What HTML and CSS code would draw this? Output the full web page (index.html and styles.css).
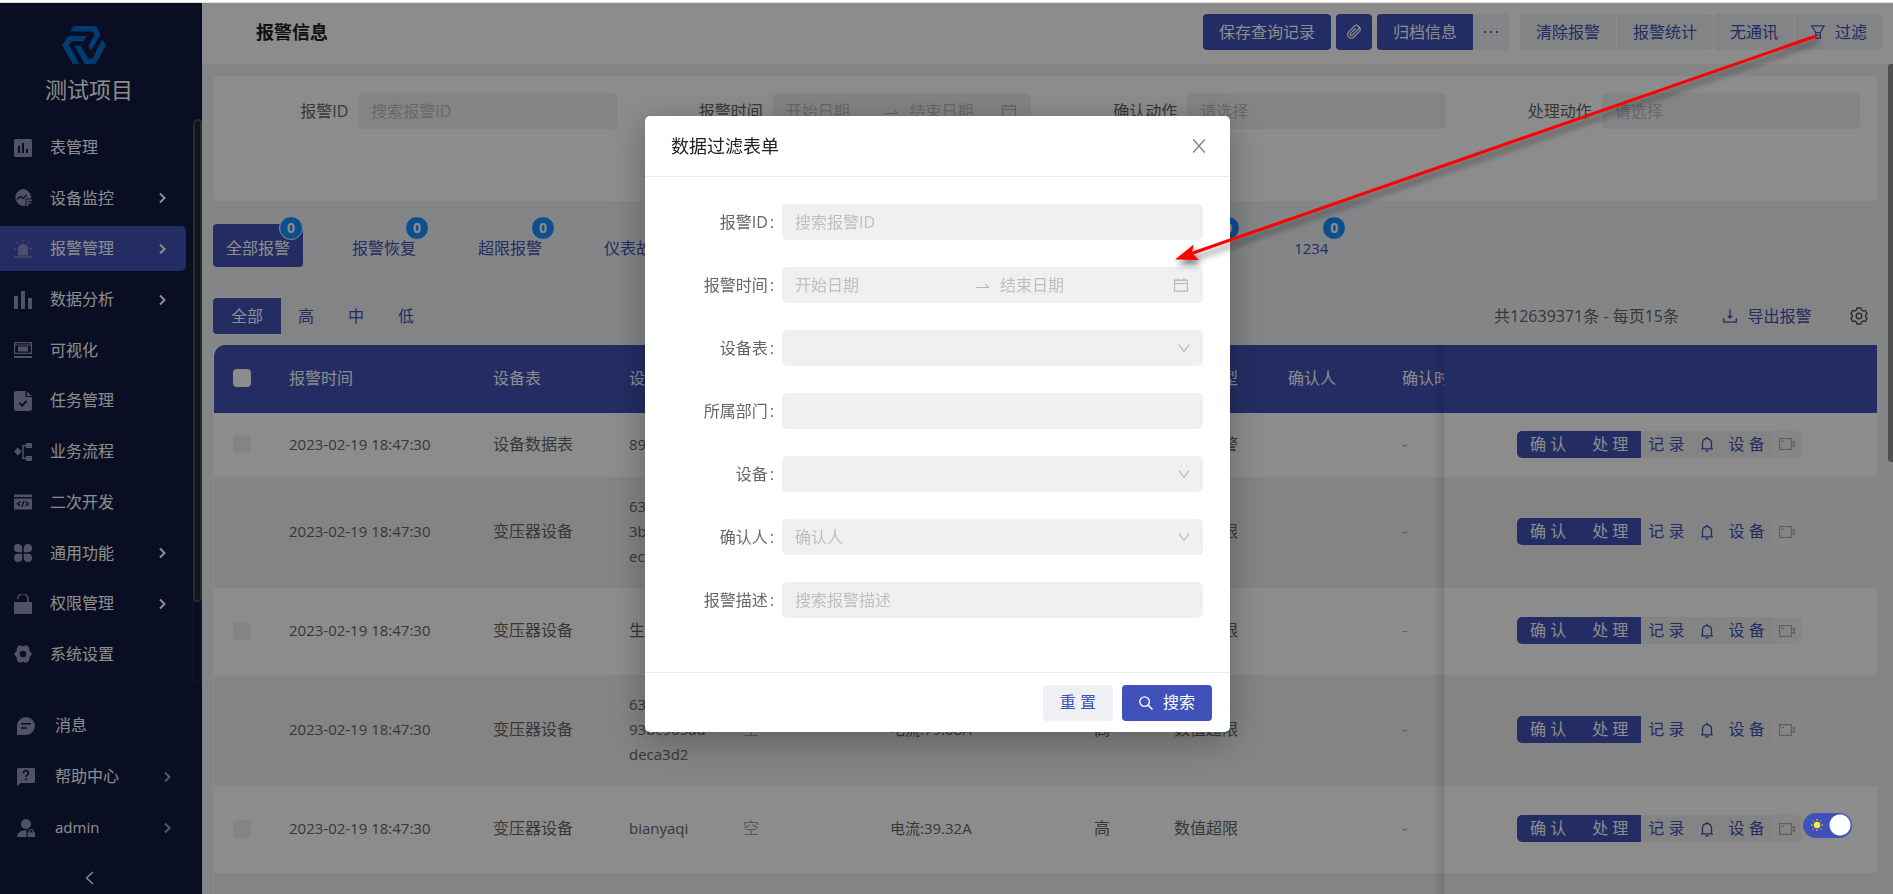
FILE: index.html
```html
<!DOCTYPE html>
<html lang="zh-CN">
<head>
<meta charset="utf-8">
<title>报警信息</title>
<link rel="stylesheet" href="styles.css">
</head>
<body>
<svg class="sprite" aria-hidden="true">
  <symbol id="i-right" viewBox="0 0 12 12"><path d="M4 1.5 8.5 6 4 10.5" fill="none" stroke="currentColor" stroke-width="2"/></symbol>
  <symbol id="i-down" viewBox="0 0 12 12"><path d="M1 2.5 6 9.5 11 2.5" fill="none" stroke="currentColor" stroke-width="1.2"/></symbol>
  <symbol id="i-cal" viewBox="0 0 14 14"><path d="M.6 2.1h12.800v11H.6zM.6 5.500h12.800M4 .3v3M10 .3v3" fill="none" stroke="currentColor" stroke-width="1.100"/></symbol>
  <symbol id="i-swap" viewBox="0 0 14 14"><path d="M.5 9.500h12.500L10 6" fill="none" stroke="currentColor" stroke-width="1.100"/></symbol>
  <symbol id="i-bell" viewBox="0 0 16 16"><path d="M3.500 12.600V7a4.500 4.500 0 0 1 9 0v5.600M2 12.900h12M8 2.500V.8M6.600 14.200a1.500 1.500 0 0 0 2.800 0" fill="none" stroke="currentColor" stroke-width="1.300"/></symbol>
  <symbol id="i-cam" viewBox="0 0 16 14"><path d="M.6 1.600h11.800v10.800H.6zM12.400 6l3-1.600v5.200l-3-1.600M2.600 4.300h2.400" fill="none" stroke="currentColor" stroke-width="1.200"/></symbol>
</svg>

<div class="app">
  <aside class="sidebar">
    <div class="brand">
      <svg class="logo" viewBox="0 0 44 38"><g fill="#006dcf"><path d="M11.500 0H34l4.500 8.500L29 25l-2.700-5.200L32.500 8.800 31 5.500H8.300z"/><path d="M6.500 10h18.200l-3.200 5.300H9.700L7 19l10.300 19h-6.500L0 19.200z"/><path d="M40.300 13.500 44 19.200 33.500 38H22.800L12.200 19.500h6.400l7.500 13h4.400L37 19.500z"/></g></svg>
      <span class="brand-name">测试项目</span>
    </div>
    <div class="menu-wrap">
      <nav class="menu">
        <a class="item" href="#"><svg class="ico" viewBox="0 0 18 18"><path fill-rule="evenodd" fill="currentColor" d="M1.500 0h15A1.500 1.500 0 0 1 18 1.500v15a1.500 1.500 0 0 1-1.500 1.500h-15A1.500 1.500 0 0 1 0 16.500v-15A1.500 1.500 0 0 1 1.500 0zM4 7v7h2V7zm4-3v10h2V4zm4 6v4h2v-4z"/></svg><span>表管理</span></a>
        <a class="item" href="#"><svg class="ico" viewBox="0 0 18 18"><path fill="currentColor" d="M8.500 0a8.500 8.500 0 0 1 8.500 9.500h-5.500v7.300A8.500 8.500 0 1 1 8.500 0z"/><path d="m3 10.500 3.500-3.200 2.500 2L13 6" fill="none" stroke="#121a3e" stroke-width="1.300"/><path fill="currentColor" d="M12.500 10.500h5.500V12h-3.800v1h3v1.400h-3v3h-1.700z"/></svg><span>设备监控</span><svg class="chev"><use href="#i-right"/></svg></a>
        <a class="item active" href="#"><svg class="ico" viewBox="0 0 18 18"><path fill="currentColor" d="M4 15.500V9a5 5 0 0 1 10 0v6.500zM0 16.300h18v1.200H0zM8.500 0h1v2.500h-1zM2.600 2.200l.8-.7 1.600 1.900-.7.600zM14.600 1.500l.8.700L13.700 4l-.7-.6zM0 8.300h2.300v1H0zM15.700 8.300H18v1h-2.300z"/></svg><span>报警管理</span><svg class="chev"><use href="#i-right"/></svg></a>
        <a class="item" href="#"><svg class="ico" viewBox="0 0 18 18"><path fill="currentColor" d="M0 5h4v13H0zM7 0h4v18H7zM14 7h4v11h-4z"/></svg><span>数据分析</span><svg class="chev"><use href="#i-right"/></svg></a>
        <a class="item" href="#"><svg class="ico" viewBox="0 0 18 18"><path d="M.6 1.600h16.800v10.800H.6z" fill="none" stroke="currentColor" stroke-width="1.200"/><path d="M0 4h18" stroke="currentColor" stroke-width="1"/><path fill="currentColor" d="M4 5.500h10v5H4zM0 15h18v2H0z"/></svg><span>可视化</span></a>
        <a class="item" href="#"><svg class="ico" viewBox="0 0 18 20"><path fill="currentColor" d="M2.500 0H11.500v6H18v11.500a2.500 2.500 0 0 1-2.500 2.500h-13A2.500 2.500 0 0 1 0 17.500v-15A2.500 2.500 0 0 1 2.500 0zM13 .5 17.600 5H13z"/><path d="m5.500 12 2.700 2.600L12.500 10" fill="none" stroke="#121a3e" stroke-width="1.900"/></svg><span>任务管理</span></a>
        <a class="item" href="#"><svg class="ico" viewBox="0 0 18 18"><path fill="currentColor" d="m0 8.500 3.800-4 3.800 4-3.800 4zM12 0h6v5h-6zM12 13h6v5h-6z"/><path d="M12 2.500H9v13h3" fill="none" stroke="currentColor" stroke-width="1.500"/></svg><span>业务流程</span></a>
        <a class="item" href="#"><svg class="ico" viewBox="0 0 18 18"><path fill="currentColor" d="M0 1.500h18V4H0zM0 5.500h18v11H0z"/><path d="M6.500 8.500 3.500 10.800l3 2.200M11.500 8.500l3 2.300-3 2.200M10 8l-2 5.500" fill="none" stroke="#121a3e" stroke-width="1.300"/></svg><span>二次开发</span></a>
        <a class="item" href="#"><svg class="ico" viewBox="0 0 18 18"><path fill="currentColor" d="M4 0a4 4 0 0 1 4.200 4v4.200H4A4 4 0 1 1 4 0zM14 0a4 4 0 1 1 0 8.200H9.800V4A4 4 0 0 1 14 0zM4 9.800h4.200V14A4.100 4.100 0 1 1 4 9.800zM9.800 9.800H14A4.100 4.100 0 1 1 9.800 14z"/></svg><span>通用功能</span><svg class="chev"><use href="#i-right"/></svg></a>
        <a class="item" href="#"><svg class="ico" viewBox="0 0 18 20"><rect y="8" width="18" height="12" rx="1" fill="currentColor"/><path d="M3.500 5a5.200 5.200 0 0 1 10.400 0v3" fill="none" stroke="currentColor" stroke-width="1.500"/></svg><span>权限管理</span><svg class="chev"><use href="#i-right"/></svg></a>
        <a class="item" href="#"><svg class="ico" viewBox="0 0 18 18"><path fill="currentColor" fill-rule="evenodd" d="M4.500.5h3L9 1.500l1.500-1h3L15.200 3v2.200L18 9l-2.800 3.800V15l-1.700 2.500h-3l-1.500-1-1.500 1h-3L2.800 15v-2.200L0 9l2.800-3.800V3zM9 5.800a3.200 3.200 0 1 0 0 6.400 3.200 3.200 0 0 0 0-6.400z"/></svg><span>系统设置</span></a>
      </nav>
      <div class="menu-track"><div class="menu-thumb"></div></div>
    </div>
    <nav class="menu-foot">
      <a class="item" href="#"><svg class="ico" viewBox="0 0 18 18"><path fill="currentColor" d="M9 0a9 9 0 1 1 0 18H0V9a9 9 0 0 1 9-9z"/><path d="M4 6.800h10M4 11h6" stroke="#121a3e" stroke-width="1.600"/></svg><span>消息</span></a>
      <a class="item" href="#"><svg class="ico" viewBox="0 0 18 18"><path fill="currentColor" d="M1.500 0h15A1.500 1.500 0 0 1 18 1.500v12a1.500 1.500 0 0 1-1.500 1.500H4l-4 3V1.500A1.500 1.500 0 0 1 1.500 0z"/><path d="M6.600 5.200A2.400 2.400 0 1 1 9.900 7.200Q9 7.600 9 9M9 10.400v1.800" fill="none" stroke="#121a3e" stroke-width="1.700"/></svg><span>帮助中心</span><svg class="chev"><use href="#i-right"/></svg></a>
      <a class="item" href="#"><svg class="ico" viewBox="0 0 18 18"><circle cx="9" cy="5" r="5" fill="currentColor"/><path fill="currentColor" d="M0 18c0-4 3.500-6.800 8.500-6.800h1V18zM10.700 13.500H18V18h-7.300z"/><path d="M12.300 14v-1.500a2 2 0 0 1 4 0V14" fill="none" stroke="currentColor" stroke-width="1.200"/></svg><span class="latin">admin</span><svg class="chev"><use href="#i-right"/></svg></a>
      <button class="collapse" aria-label="收起"><svg viewBox="0 0 10 14"><path d="M8 1 1.500 7 8 13" fill="none" stroke="currentColor" stroke-width="1.400"/></svg></button>
    </nav>
  </aside>

  <main class="main">
    <header class="topbar">
      <h1>报警信息</h1>
      <div class="actions">
        <button class="btn primary">保存查询记录</button>
        <button class="btn primary square" aria-label="附件"><svg class="i16" viewBox="0 0 16 16"><path d="M13.800 7.200 8 13a3.700 3.700 0 0 1-5.300-5.200L8.500 2a2.500 2.500 0 0 1 3.600 3.500l-5.600 5.700a1.300 1.300 0 0 1-1.900-1.800L9.800 4.300M13.800 7.200A3.700 3.700 0 0 0 12 2" fill="none" stroke="currentColor" stroke-width="1.200"/></svg></button>
        <div class="group"><button class="btn primary">归档信息</button><button class="btn square" aria-label="更多"><svg class="i16" viewBox="0 0 16 16"><path fill="currentColor" d="M1 7h2v2H1zM7 7h2v2H7zM13 7h2v2h-2z"/></svg></button></div>
        <div class="group links"><button class="btn">清除报警</button><button class="btn">报警统计</button><button class="btn">无通讯</button><button class="btn"><svg class="i14" viewBox="0 0 14 14"><path d="M.8.8h12.400L9.300 7.500H4.700zM4.700 7.500v5.700h4.600V7.500M4.700 10h4.600" fill="none" stroke="currentColor" stroke-width="1.200"/></svg>过滤</button></div>
      </div>
    </header>

    <div class="body">
      <div class="content">
        <section class="search">
          <div class="field"><label for="s-id">报警ID</label><div class="box"><input id="s-id" placeholder="搜索报警ID"></div></div>
          <div class="field"><label for="s-from">报警时间</label><div class="box"><input id="s-from" placeholder="开始日期"><svg class="swap"><use href="#i-swap"/></svg><input aria-label="结束日期" placeholder="结束日期"><svg class="i14"><use href="#i-cal"/></svg></div></div>
          <div class="field"><label for="s-ack">确认动作</label><div class="box"><select id="s-ack"><option>请选择</option></select></div></div>
          <div class="field"><label for="s-act">处理动作</label><div class="box"><select id="s-act"><option>请选择</option></select></div></div>
        </section>

        <div class="tabs">
          <button class="tab on">全部报警<i>0</i></button>
          <button class="tab">报警恢复<i>0</i></button>
          <button class="tab">超限报警<i>0</i></button>
          <button class="tab">仪表故障<i>0</i></button>
          <button class="tab">通讯故障<i>0</i></button>
          <button class="tab">待确认<i>0</i></button>
          <button class="tab">未处理<i>0</i></button>
          <button class="tab">已处理<i>0</i></button>
          <button class="tab">其他2<i>0</i></button>
          <button class="tab short">1234<i>0</i></button>
        </div>

        <div class="toolbar">
          <div class="group"><button class="btn primary all">全部</button><button class="btn">高</button><button class="btn">中</button><button class="btn">低</button></div>
          <span class="total">共12639371条 - 每页15条</span>
          <button class="btn export"><svg class="i14" viewBox="0 0 14 14"><path d="M.7 9v4.200h12.600V9M7 .5v8.500M4.800 6.800 7 9l2.200-2.200" fill="none" stroke="currentColor" stroke-width="1.300"/></svg>导出报警</button>
          <button class="gear" aria-label="设置"><svg viewBox="0 0 18 18"><path d="M7 1h4l.6 2.200 1.400.8 2.200-.6 1.900 3.400L15.600 8.300v1.400l1.500 1.500-1.900 3.400-2.200-.6-1.400.8L11 17H7l-.6-2.200L5 14l-2.200.6-1.900-3.400 1.500-1.500V8.300L.9 6.800l1.900-3.400L5 4l1.400-.8z" fill="none" stroke="currentColor" stroke-width="1.400" stroke-linejoin="round"/><circle cx="9" cy="9" r="2.800" fill="none" stroke="currentColor" stroke-width="1.400"/></svg></button>
        </div>

        <div class="table-wrap">
          <table>
            <colgroup><col class="c-check"><col class="c-wide"><col class="c-table"><col class="c-dev"><col class="c-dept"><col class="c-wide"><col class="c-level"><col class="c-dev"><col class="c-dev"><col class="c-wide"><col class="c-ops"></colgroup>
            <thead><tr><th><input type="checkbox" aria-label="全选"></th><th>报警时间</th><th>设备表</th><th>设备</th><th>所属部门</th><th>报警描述</th><th>级别</th><th>报警类型</th><th>确认人</th><th>确认时间</th><th class="fix"></th></tr></thead>
            <tbody>
              <tr><td><input type="checkbox" aria-label="选择"></td><td class="latin">2023-02-19 18:47:30</td><td>设备数据表</td><td class="latin">89</td><td class="dim"></td><td></td><td></td><td>仪表报警</td><td></td><td class="dim">-</td><td class="fix"><div class="ops"><button class="op p">确 认</button><button class="op p">处 理</button><button class="op">记 录</button><button class="op" aria-label="通知"><svg class="i16"><use href="#i-bell"/></svg></button><button class="op">设 备</button><button class="op cam" aria-label="视频"><svg class="i16"><use href="#i-cam"/></svg></button></div></td></tr>
              <tr><td><input type="checkbox" aria-label="选择"></td><td class="latin">2023-02-19 18:47:30</td><td>变压器设备</td><td class="latin">63<br>3b<br>ec</td><td class="dim"></td><td></td><td></td><td>数值超限</td><td></td><td class="dim">-</td><td class="fix"><div class="ops"><button class="op p">确 认</button><button class="op p">处 理</button><button class="op">记 录</button><button class="op" aria-label="通知"><svg class="i16"><use href="#i-bell"/></svg></button><button class="op">设 备</button><button class="op cam" aria-label="视频"><svg class="i16"><use href="#i-cam"/></svg></button></div></td></tr>
              <tr class="mid"><td><input type="checkbox" aria-label="选择"></td><td class="latin">2023-02-19 18:47:30</td><td>变压器设备</td><td>生</td><td class="dim"></td><td></td><td></td><td>数值超限</td><td></td><td class="dim">-</td><td class="fix"><div class="ops"><button class="op p">确 认</button><button class="op p">处 理</button><button class="op">记 录</button><button class="op" aria-label="通知"><svg class="i16"><use href="#i-bell"/></svg></button><button class="op">设 备</button><button class="op cam" aria-label="视频"><svg class="i16"><use href="#i-cam"/></svg></button></div></td></tr>
              <tr><td><input type="checkbox" aria-label="选择"></td><td class="latin">2023-02-19 18:47:30</td><td>变压器设备</td><td class="latin">63<br>93bc965ad<br>deca3d2</td><td class="dim">空</td><td class="latin">电流:79.08A</td><td>高</td><td>数值超限</td><td></td><td class="dim">-</td><td class="fix"><div class="ops"><button class="op p">确 认</button><button class="op p">处 理</button><button class="op">记 录</button><button class="op" aria-label="通知"><svg class="i16"><use href="#i-bell"/></svg></button><button class="op">设 备</button><button class="op cam" aria-label="视频"><svg class="i16"><use href="#i-cam"/></svg></button></div></td></tr>
              <tr class="mid"><td><input type="checkbox" aria-label="选择"></td><td class="latin">2023-02-19 18:47:30</td><td>变压器设备</td><td class="latin">bianyaqi</td><td class="dim">空</td><td class="latin">电流:39.32A</td><td>高</td><td>数值超限</td><td></td><td class="dim">-</td><td class="fix"><div class="ops"><button class="op p">确 认</button><button class="op p">处 理</button><button class="op">记 录</button><button class="op" aria-label="通知"><svg class="i16"><use href="#i-bell"/></svg></button><button class="op">设 备</button><button class="op cam" aria-label="视频"><svg class="i16"><use href="#i-cam"/></svg></button></div></td></tr>
              <tr class="mid"><td></td><td></td><td></td><td></td><td></td><td></td><td></td><td></td><td></td><td></td><td class="fix"></td></tr>
            </tbody>
          </table>
        </div>
      </div>
      <div class="page-track"><div class="page-thumb"></div></div>
    </div>
  </main>
</div>

<div class="mask">
  <form class="modal" role="dialog" aria-labelledby="dlg-title">
    <div class="modal-head"><h2 id="dlg-title">数据过滤表单</h2><button type="button" class="close" aria-label="关闭"><svg viewBox="0 0 14 14"><path d="M1.200.5 12.800 13.500M12.800.5 1.200 13.500" stroke="currentColor" stroke-width="1.300"/></svg></button></div>
    <div class="modal-body">
      <div class="row"><label for="f-id">报警ID<b>:</b></label><div class="box"><input id="f-id" placeholder="搜索报警ID"></div></div>
      <div class="row"><label for="f-from">报警时间<b>:</b></label><div class="box"><input id="f-from" placeholder="开始日期"><svg class="swap"><use href="#i-swap"/></svg><input aria-label="结束日期" placeholder="结束日期"><svg class="i14"><use href="#i-cal"/></svg></div></div>
      <div class="row"><label for="f-table">设备表<b>:</b></label><div class="box"><select id="f-table"><option></option></select><svg class="i12"><use href="#i-down"/></svg></div></div>
      <div class="row"><label for="f-dept">所属部门<b>:</b></label><div class="box"><input id="f-dept"></div></div>
      <div class="row"><label for="f-dev">设备<b>:</b></label><div class="box"><select id="f-dev"><option></option></select><svg class="i12"><use href="#i-down"/></svg></div></div>
      <div class="row"><label for="f-user">确认人<b>:</b></label><div class="box"><select id="f-user"><option>确认人</option></select><svg class="i12"><use href="#i-down"/></svg></div></div>
      <div class="row"><label for="f-desc">报警描述<b>:</b></label><div class="box"><input id="f-desc" placeholder="搜索报警描述"></div></div>
    </div>
    <div class="modal-foot">
      <button type="reset" class="btn">重 置</button>
      <button type="button" class="btn primary"><svg class="i14" viewBox="0 0 14 14"><circle cx="5.600" cy="5.600" r="4.800" fill="none" stroke="currentColor" stroke-width="1.300"/><path d="m9 9 4.500 4.500" stroke="currentColor" stroke-width="1.500"/></svg>搜索</button>
    </div>
  </form>
</div>

<label class="theme"><input type="checkbox" role="switch" aria-label="主题" checked><svg viewBox="0 0 12 12"><circle cx="6" cy="6" r="3.200" fill="#ffee2e"/><path d="M6 0v1.500M6 10.500V12M0 6h1.500M10.500 6H12M1.500 1.500l1 1M9.500 9.500l1 1M1.500 10.500l1-1M9.500 2.500l1-1" stroke="#ffee2e" stroke-width="1"/></svg></label>

<svg class="arrow" viewBox="0 0 660 250" aria-hidden="true"><path d="M20 224 646 6" stroke="#f00" stroke-width="3"/><path d="M5 229.500 23.700 214.500 22 223 29 230z" fill="#f00"/></svg>
</body>
</html>
```
FILE: styles.css
```css
* { box-sizing: border-box; }
body {
  margin: 0;
  height: 100vh;
  overflow: hidden;
  padding-top: 3px;
  background: linear-gradient(#fff 2px, #dcdcdc 2px, #dcdcdc 3px, #fff 3px);
  font: 16px/25px "Open Sans", "Noto Sans CJK SC", sans-serif;
  color: #666;
}
button, input, select { font: inherit; color: inherit; margin: 0; border: 0; padding: 0; background: none; }
a { color: inherit; text-decoration: none; }
h1, h2 { margin: 0; }
svg { display: block; flex: none; }
.sprite { position: absolute; width: 0; height: 0; }
.i12 { width: 12px; height: 12px; }
.i14 { width: 14px; height: 14px; }
.i16 { width: 16px; height: 16px; }
.latin { font-size: 15px; }

.app { display: flex; height: 100%; }

/* Sidebar */
.sidebar { width: 202px; flex: none; display: flex; flex-direction: column; background: #121a3e; color: #fff; }
.brand { height: 116px; padding: 23px 24px 0 0; display: flex; flex-direction: column; align-items: center; gap: 7px; }
.logo { width: 44px; height: 38px; margin-right: 10px; }
.brand-name { font-size: 22px; line-height: 36px; }
.menu-wrap { flex: 1; display: flex; min-height: 0; }
.menu { flex: 1; padding: 6px 7px 6px 0; display: flex; flex-direction: column; justify-content: space-between; }
.item { height: 45px; flex: none; padding: 0 18px 0 14px; display: flex; align-items: center; border-radius: 0 5px 5px 0; }
.item.active { background: #4052b6; }
.item span { margin-left: 18px; flex: 1; }
.ico { width: 18px; height: 20px; color: #9397b4; }
.active .ico { color: #8b93c4; }
.chev { width: 12px; height: 14px; }
.menu-track { width: 9px; border: 1px solid #2c3156; border-radius: 5px; }
.menu-thumb { width: 9px; height: 86%; margin: -1px; border-radius: 5px; background: #24262f; border: 2px solid #494c57; }
.menu-foot { padding: 20px 14px 0 3px; display: flex; flex-direction: column; gap: 6px; }
.menu-foot .item { padding-right: 15px; }
.menu-foot .item span { margin-left: 20px; }
.menu-foot .chev { color: #9a9db0; }
.collapse { align-self: center; width: 30px; height: 38px; padding-top: 6px; margin-right: 12px; display: grid; place-items: center; color: #fff; }
.collapse svg { width: 10px; height: 14px; }

/* Top bar */
.main { flex: 1; min-width: 0; display: flex; flex-direction: column; background: #f0f2f5; }
.topbar { height: 61px; flex: none; padding: 0 10px 3px 54px; display: flex; align-items: center; justify-content: space-between; background: #fff; }
h1 { font-size: 18px; color: #222; }
.actions { display: flex; gap: 5px; }
.group { display: flex; }
.links { margin-left: 6px; gap: 1px; }
.btn { height: 36px; padding: 0 17px; display: flex; align-items: center; justify-content: center; gap: 10px; border-radius: 4px; background: #eff0f3; color: #4052b6; white-space: nowrap; }
.topbar .btn { padding: 0 16px; }
.btn.primary { background: #4052b9; color: #fff; }
.topbar .square { width: 36px; padding: 0; }
.group .btn.primary { border-radius: 4px 0 0 4px; }

/* Page */
.body { flex: 1; min-height: 0; display: flex; }
.content { flex: 1; min-width: 0; padding: 12px 11px 0; display: flex; flex-direction: column; }
.page-track { width: 5px; }
.page-thumb { height: 48%; border-radius: 3px 0 0 3px; background: #909090; }
.search { height: 125px; flex: none; padding: 17px 17px 0 0; display: grid; grid-template-columns: repeat(4, 1fr); gap: 11px; background: #fff; border-radius: 5px; }
.field { display: flex; height: 36px; align-items: center; }
.field label { flex: 1; text-align: right; padding-right: 10px; }
.field .box { width: 64%; }
.box { height: 36px; padding: 0 15px 0 13px; display: flex; align-items: center; border-radius: 5px; background: #eff0f2; color: #b5b5b5; }
.box input, .box select { flex: 1; width: 0; min-width: 0; height: 100%; appearance: none; outline: 0; }
.box input::placeholder { color: #bfbfbf; opacity: 1; }
.box select { color: #bfbfbf; }
.box .i14 { margin-left: 4px; }
.swap { width: 35px; height: 14px; }

.tabs { display: flex; gap: 36px; margin-top: 23px; }
.tab { position: relative; height: 43px; padding: 5px 13px 0; border-radius: 4px; color: #4052b6; white-space: nowrap; }
.tab.on { background: #4052b6; color: #fff; }
.tab.short { font-size: 15px; min-width: 70px; }
.tab i { position: absolute; right: 0; top: -8px; width: 24px; height: 24px; border: 1px solid #fff; border-radius: 50%; background: #1890ff; color: #fff; font: bold 14px/22px "Open Sans", sans-serif; text-align: center; }

.toolbar { margin-top: 31px; display: flex; align-items: center; }
.all { min-width: 68px; }
.total { margin-left: auto; margin-right: 27px; }
.toolbar .btn { background: #f0f0f1; }
.toolbar .btn.primary { background: #4052b6; }
.toolbar .export { width: 123px; }
.gear { margin: 0 9px 0 21px; color: #555; }
.gear svg { width: 18px; height: 18px; }

/* Table */
.table-wrap { flex: 1; min-height: 0; margin-top: 11px; overflow: hidden; border-left: 1px solid #fff; border-radius: 12px 0 0 0; }
table { table-layout: fixed; width: 1805px; min-width: 100%; border-collapse: separate; border-spacing: 0; }
.c-check { width: 55px; }
.c-wide { width: 204px; }
.c-table { width: 136px; }
.c-dev { width: 114px; }
.c-dept { width: 147px; }
.c-level { width: 80px; }
.c-ops { width: 433px; }
th, td { padding: 17px 0 19px 20px; text-align: left; font-weight: 400; white-space: nowrap; }
th:first-child, td:first-child { padding-left: 19px; }
th { height: 68px; background: #4052b6; color: #fff; }
td { height: 64px; background: #fff; }
tr:nth-child(even) td { background: #f0f0f0; }
.mid td { height: 87px; }
td.dim { color: #a8a8a8; }
th input, td input { display: block; width: 18px; height: 18px; border-radius: 4px; appearance: none; background: #f0f0f0; }
th:first-child input { background: #fff; }
.fix { position: sticky; right: 0; padding-left: 73px; }
.fix::before { content: ""; position: absolute; top: 0; bottom: 0; right: 100%; width: 10px; background: linear-gradient(to left, rgba(0, 0, 0, .12), rgba(0, 0, 0, 0)); }
.ops { display: flex; margin: -1px 0; }
.op { height: 27px; padding: 0 7px; display: flex; align-items: center; justify-content: center; background: #f0f0f2; color: #4052b6; }
.op.p { background: #4052b6; color: #fff; padding: 0 13px; }
.op:first-child { border-radius: 5px 0 0 5px; }
.op.cam { color: #b0b0b0; background: #f4f4f4; border-radius: 0 5px 5px 0; }

/* Filter dialog */
.mask { position: fixed; inset: 3px 0 0; z-index: 10; padding: 113px 18px 0 0; background: rgba(0, 0, 0, .45); }
.modal { width: 585px; margin: 0 auto; background: #fff; border-radius: 5px; box-shadow: 0 8px 36px rgba(0, 0, 0, .3); }
.modal-head { height: 61px; padding: 0 24px 0 26px; display: flex; align-items: center; justify-content: space-between; border-bottom: 1px solid #ebedf0; }
h2 { font-size: 18px; font-weight: 400; color: #222; }
.close { color: #808080; }
.close svg { width: 14px; height: 14px; }
.modal-body { padding: 27px 27px 54px 0; display: grid; gap: 27px; }
.row { display: flex; align-items: center; }
.row label { flex: 1; padding-right: 8px; text-align: right; }
.row b { font-weight: 400; margin-left: 2px; }
.row .box { width: 421px; }
.box .i12 { margin-right: -2px; }
.modal-foot { height: 60px; padding: 0 18px; display: flex; align-items: center; justify-content: flex-end; gap: 9px; border-top: 1px solid #ebedf0; }

/* Theme switch */
.theme { position: fixed; z-index: 20; right: 41px; bottom: 56px; width: 49px; height: 25px; }
.theme input { display: block; width: 49px; height: 25px; border-radius: 13px; appearance: none; background: radial-gradient(circle at 37px 12px, #fff 10px, #4052b9 11px); }
.theme svg { position: absolute; left: 8px; top: 6px; width: 12px; height: 12px; }

.arrow { position: fixed; z-index: 30; right: 63px; top: 30px; width: 660px; height: 250px; pointer-events: none; filter: drop-shadow(2px 5px 3px rgba(0, 0, 0, .5)); }
```
